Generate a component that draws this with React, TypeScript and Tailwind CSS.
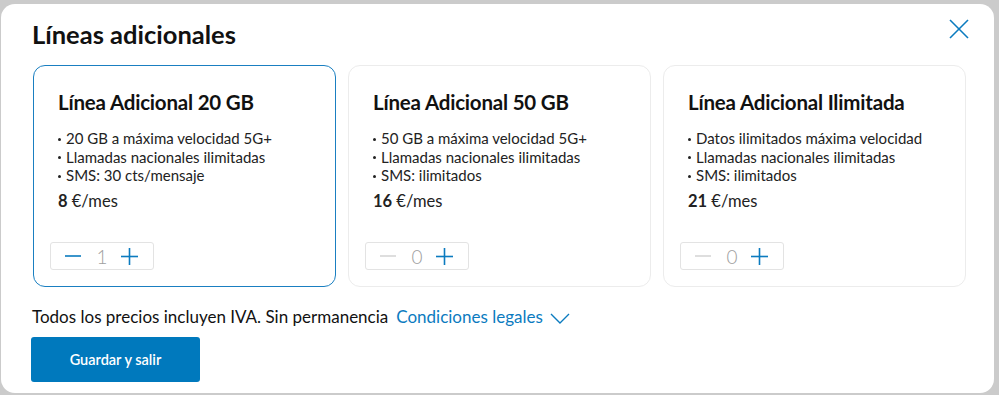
import React from "react";

const font = { fontFamily: "Lato, 'Open Sans', sans-serif" };

function Stepper({ value, active }: { value: number; active: boolean }) {
  return (
    <div className="flex h-[28px] w-[104px] items-center rounded-[3px] border border-[#e3e3e3] bg-white">
      <svg width="16" height="16" viewBox="0 0 16 16" className="ml-[14px]">
        <line x1="0" y1="8" x2="16" y2="8" stroke={active ? "#0b7bbf" : "#d6d6d6"} strokeWidth="1.6" />
      </svg>
      <span className="ml-[14px] w-[14px] text-center text-[19px] leading-none font-light text-[#a0a0a0]">{value}</span>
      <svg width="17" height="17" viewBox="0 0 17 17" className="ml-[12px]">
        <line x1="0" y1="8.5" x2="17" y2="8.5" stroke="#0b7bbf" strokeWidth="1.6" />
        <line x1="8.5" y1="0" x2="8.5" y2="17" stroke="#0b7bbf" strokeWidth="1.6" />
      </svg>
    </div>
  );
}

function Card({ title, items, price, value, selected }: { title: string; items: string[]; price: string; value: number; selected?: boolean }) {
  return (
    <div
      className={`flex h-[222px] flex-col rounded-[12px] pt-[23px] pl-[24px] ${selected ? "border-[1.5px] border-[#1a7fc1]" : "border border-[#ececec]"}`}
    >
      <div className="text-[20.5px] font-bold leading-[26px] text-[#111] tracking-[-0.2px]">{title}</div>
      <ul className="mt-[14px] text-[15px] leading-[18.5px] text-[#222]">
        {items.map((t) => (
          <li key={t} className="flex items-center">
            <span className="mr-[5px] mt-[2px] h-[3px] w-[3px] rounded-full bg-[#222]" />
            <span>{t}</span>
          </li>
        ))}
      </ul>
      <div className="mt-[6px] text-[16.5px] leading-[20px] text-[#222]">
        <span className="font-bold">{price}</span> €/mes
      </div>
      <div className="mt-auto mb-[16px] -ml-[8px]">
        <Stepper value={value} active={value > 0} />
      </div>
    </div>
  );
}

export default function App() {
  return (
    <div className="h-[395px] w-[999px] overflow-hidden bg-[#cbcbcb] pt-[4px] pl-[1px] pr-[5px]" style={font}>
      <div className="relative h-[389px] rounded-[14px] bg-white pl-[32px] pr-[28px] pt-[15px]">
        <button className="absolute right-[25px] top-[15px]" aria-label="Cerrar">
          <svg width="20" height="20" viewBox="0 0 20 20">
            <line x1="1" y1="1" x2="19" y2="19" stroke="#0b7bbf" strokeWidth="1.6" />
            <line x1="19" y1="1" x2="1" y2="19" stroke="#0b7bbf" strokeWidth="1.6" />
          </svg>
        </button>
        <h1 className="-ml-[1px] text-[25.5px] font-bold leading-[30px] text-[#111]">Líneas adicionales</h1>
        <div className="mt-[16px] grid grid-cols-3 gap-[12px]">
          <Card
            selected
            title="Línea Adicional 20 GB"
            items={["20 GB a máxima velocidad 5G+", "Llamadas nacionales ilimitadas", "SMS: 30 cts/mensaje"]}
            price="8"
            value={1}
          />
          <Card
            title="Línea Adicional 50 GB"
            items={["50 GB a máxima velocidad 5G+", "Llamadas nacionales ilimitadas", "SMS: ilimitados"]}
            price="16"
            value={0}
          />
          <Card
            title="Línea Adicional Ilimitada"
            items={["Datos ilimitados máxima velocidad", "Llamadas nacionales ilimitadas", "SMS: ilimitados"]}
            price="21"
            value={0}
          />
        </div>
        <div className="mt-[19px] -ml-[1px] flex items-center text-[17px] leading-[22px] text-[#111]">
          <span>Todos los precios incluyen IVA. Sin permanencia</span>
          <span className="ml-[8px] text-[#0b7bbf]">Condiciones legales</span>
          <svg width="20" height="12" viewBox="0 0 20 12" className="ml-[7px] mt-[3px]">
            <polyline points="1,1 10,10 19,1" fill="none" stroke="#0b7bbf" strokeWidth="1.4" />
          </svg>
        </div>
        <button className="mt-[9px] -ml-[2px] flex h-[45px] w-[169px] items-center justify-center rounded-[3px] bg-[#0079bd] text-[14.5px] font-semibold text-white">
          Guardar y salir
        </button>
      </div>
    </div>
  );
}
